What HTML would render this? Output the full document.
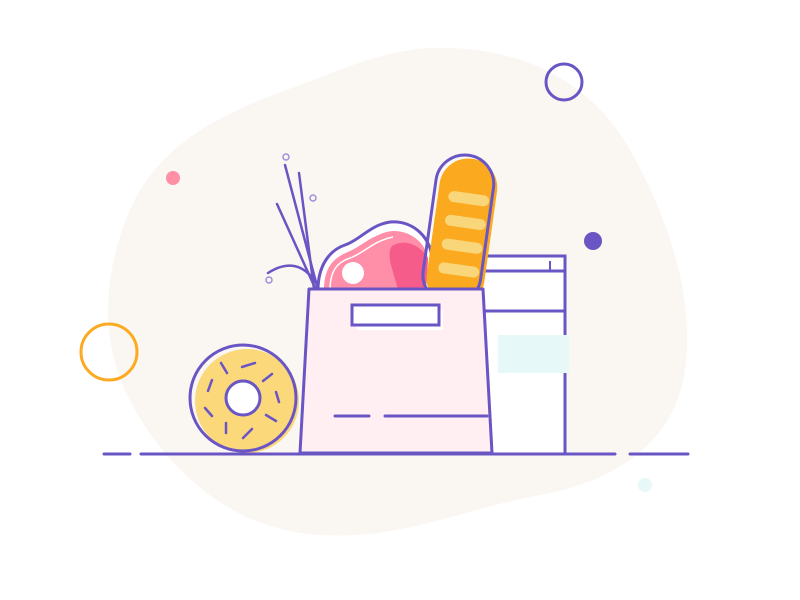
<!DOCTYPE html>
<html><head><style>html,body{margin:0;padding:0;background:#fff;width:800px;height:600px;overflow:hidden}</style></head>
<body>
<svg width="800" height="600" viewBox="0 0 800 600" xmlns="http://www.w3.org/2000/svg">
<path d="M430 48 C520 45 590 80 630 150 C670 220 695 300 685 370 C675 440 620 480 540 495 C460 510 400 540 320 535 C230 530 170 470 135 410 C100 350 100 280 130 210 C160 140 230 110 300 85 C350 65 390 50 430 48 Z" fill="#faf7f2"/>
<circle cx="564" cy="82" r="18" fill="none" stroke="#6a55c4" stroke-width="3"/>
<circle cx="173" cy="178" r="7" fill="#ff8fa5"/>
<circle cx="593" cy="241" r="9" fill="#6a55c4"/>
<circle cx="109" cy="352" r="28" fill="none" stroke="#fbaa22" stroke-width="3"/>
<circle cx="645" cy="485" r="7" fill="#e6f8f8"/>
<!-- box -->
<rect x="483" y="256" width="82" height="198" fill="#fff"/>
<g fill="none" stroke="#6a55c4" stroke-width="3">
<path d="M483 256 H565 V454"/>
<path d="M483 271 H565"/>
<path d="M483 311 H565"/>
<path d="M550 261 V270" stroke-width="2"/>
</g>
<rect x="498" y="335" width="71" height="38" fill="#e6f9f8"/>
<!-- stems -->
<g fill="none" stroke="#6a55c4" stroke-width="2.5" stroke-linecap="round">
<path d="M285 165 L318 290"/>
<path d="M299 173 L314 289"/>
<path d="M277 204 L316 290"/>
<path d="M268 273 C285 262 305 260 320 290"/>
</g>
<g fill="none" stroke="#9d90dc" stroke-width="1.5">
<circle cx="286" cy="157" r="3"/><circle cx="313" cy="198" r="3"/><circle cx="269" cy="280" r="3"/>
</g>
<!-- meat -->
<path d="M318 290 C318 265 330 250 345 245 C360 240 370 225 390 222 C415 220 432 240 432 260 L430 290 Z" fill="#fff" stroke="#6a55c4" stroke-width="3"/>
<path d="M324 290 C324 268 333 258 348 252 C362 246 372 234 392 231 C412 230 428 245 428 262 L426 290 Z" fill="#ff8ea8"/>
<path d="M330 290 C330 270 338 262 350 258 C364 253 375 240 393 237" fill="none" stroke="#fff" stroke-width="1.5"/>
<path d="M392 246 C405 238 420 245 428 258 L426 290 L398 290 C395 275 385 255 392 246 Z" fill="#f55c8a"/>
<circle cx="353" cy="273" r="11" fill="#fff"/>
<!-- baguette -->
<g transform="rotate(8 462 225)">
<rect x="434" y="158" width="58" height="150" rx="29" fill="#fbaa1f"/>
<rect x="430" y="155" width="58" height="150" rx="29" fill="none" stroke="#6a55c4" stroke-width="3"/>
<rect x="436" y="162" width="48" height="145" rx="24" fill="#fbaa1f"/>
<g stroke="#fad67a" stroke-width="11" stroke-linecap="round">
<path d="M450 198 H480"/><path d="M450 222 H480"/><path d="M450 246 H480"/><path d="M450 270 H480"/>
</g>
</g>
<!-- bag -->
<path d="M309 289 H483 L492 453 H300 Z" fill="#ffeef2" stroke="#6a55c4" stroke-width="3" stroke-linejoin="round"/>
<rect x="357" y="310" width="86" height="20" fill="#fff"/>
<rect x="352" y="305" width="87" height="20" fill="#fff" stroke="#6a55c4" stroke-width="3"/>
<g stroke="#6a55c4" stroke-width="3" stroke-linecap="round">
<path d="M335 416 H369"/><path d="M385 416 H487"/>
</g>
<!-- donut -->
<circle cx="247" cy="401" r="52" fill="#fbd87a"/>
<circle cx="243" cy="398" r="53" fill="none" stroke="#6a55c4" stroke-width="3"/>
<circle cx="243" cy="398" r="17" fill="#fff" stroke="#6a55c4" stroke-width="3"/>
<g stroke="#6a55c4" stroke-width="2.5" stroke-linecap="round">
<path d="M221 363 L227 373"/><path d="M242 367 L255 363"/><path d="M263 381 L272 374"/><path d="M212 380 L208 391"/>
<path d="M276 392 L279 402"/><path d="M205 408 L212 416"/><path d="M266 415 L276 421"/><path d="M226 423 V433"/><path d="M243 438 L252 429"/>
</g>
<!-- ground -->
<g stroke="#6a55c4" stroke-width="3" stroke-linecap="round">
<path d="M104 454 H130"/><path d="M141 454 H615"/><path d="M630 454 H688"/>
</g>
</svg>
</body></html>
